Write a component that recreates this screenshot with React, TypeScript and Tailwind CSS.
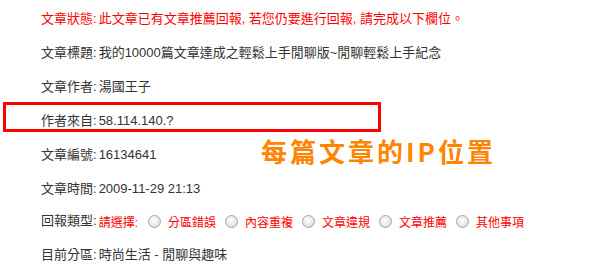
const rows: { label: string; value: string; red?: boolean }[] = [
  { label: "文章狀態:", value: "此文章已有文章推薦回報, 若您仍要進行回報, 請完成以下欄位。", red: true },
  { label: "文章標題:", value: "我的10000篇文章達成之輕鬆上手閒聊版~閒聊輕鬆上手紀念" },
  { label: "文章作者:", value: "湯國王子" },
  { label: "作者來自:", value: "58.114.140.?" },
  { label: "文章編號:", value: "16134641" },
  { label: "文章時間:", value: "2009-11-29 21:13" },
];

const reportTypes = ["分區錯誤", "內容重複", "文章違規", "文章推薦", "其他事項"];

function Radio() {
  return (
    <span className="inline-block w-[13px] h-[13px] rounded-full border border-[#a4a4a4] bg-[radial-gradient(circle_at_45%_40%,#ffffff_0%,#e8e8e8_55%,#c8c8c8_100%)] shrink-0" />
  );
}

export default function App() {
  return (
    <div className="relative w-[594px] h-[278px] bg-white overflow-hidden text-[13px] leading-[16px] text-[#333333] font-['Liberation_Sans','Noto_Sans_CJK_TC',sans-serif]">
      <div className="pt-[2px] pl-[41px] flex flex-col">
        {rows.map(r => (
          <div key={r.label} className="h-[34px] flex items-center whitespace-nowrap">
            <span className={r.red ? "text-[#ff0000]" : ""}>{r.label}</span>
            <span className={"ml-[2px] " + (r.red ? "text-[#ff0000]" : "")}>{r.value}</span>
          </div>
        ))}
        <div className="h-[34px] flex items-center whitespace-nowrap">
          <span className="-mt-[4px]">回報類型:</span>
          <span className="ml-[2px] text-[12px] text-[#ff0000]">請選擇:</span>
          {reportTypes.map((t, i) => (
            <span key={t} className="flex items-center">
              <span className={i === 0 ? "ml-[10px]" : "ml-[9px]"}><Radio /></span>
              <span className="ml-[7px] text-[12px] text-[#ff0000]">{t}</span>
            </span>
          ))}
        </div>
        <div className="h-[30px] flex items-center whitespace-nowrap">
          <span>目前分區:</span>
          <span className="ml-[2px]">時尚生活 - 閒聊與趣味</span>
        </div>
      </div>

      {/* annotation overlay */}
      <div className="absolute left-[3px] top-[102px] w-[378px] h-[30px] border-[3px] border-[#ff0000]" />
      <div className="absolute left-[261px] top-[135px] text-[26px] leading-[32px] font-bold tracking-[3px] text-[#ff8400] whitespace-nowrap font-['Noto_Sans_CJK_TC',sans-serif]">
        每篇文章的IP位置
      </div>
    </div>
  );
}
